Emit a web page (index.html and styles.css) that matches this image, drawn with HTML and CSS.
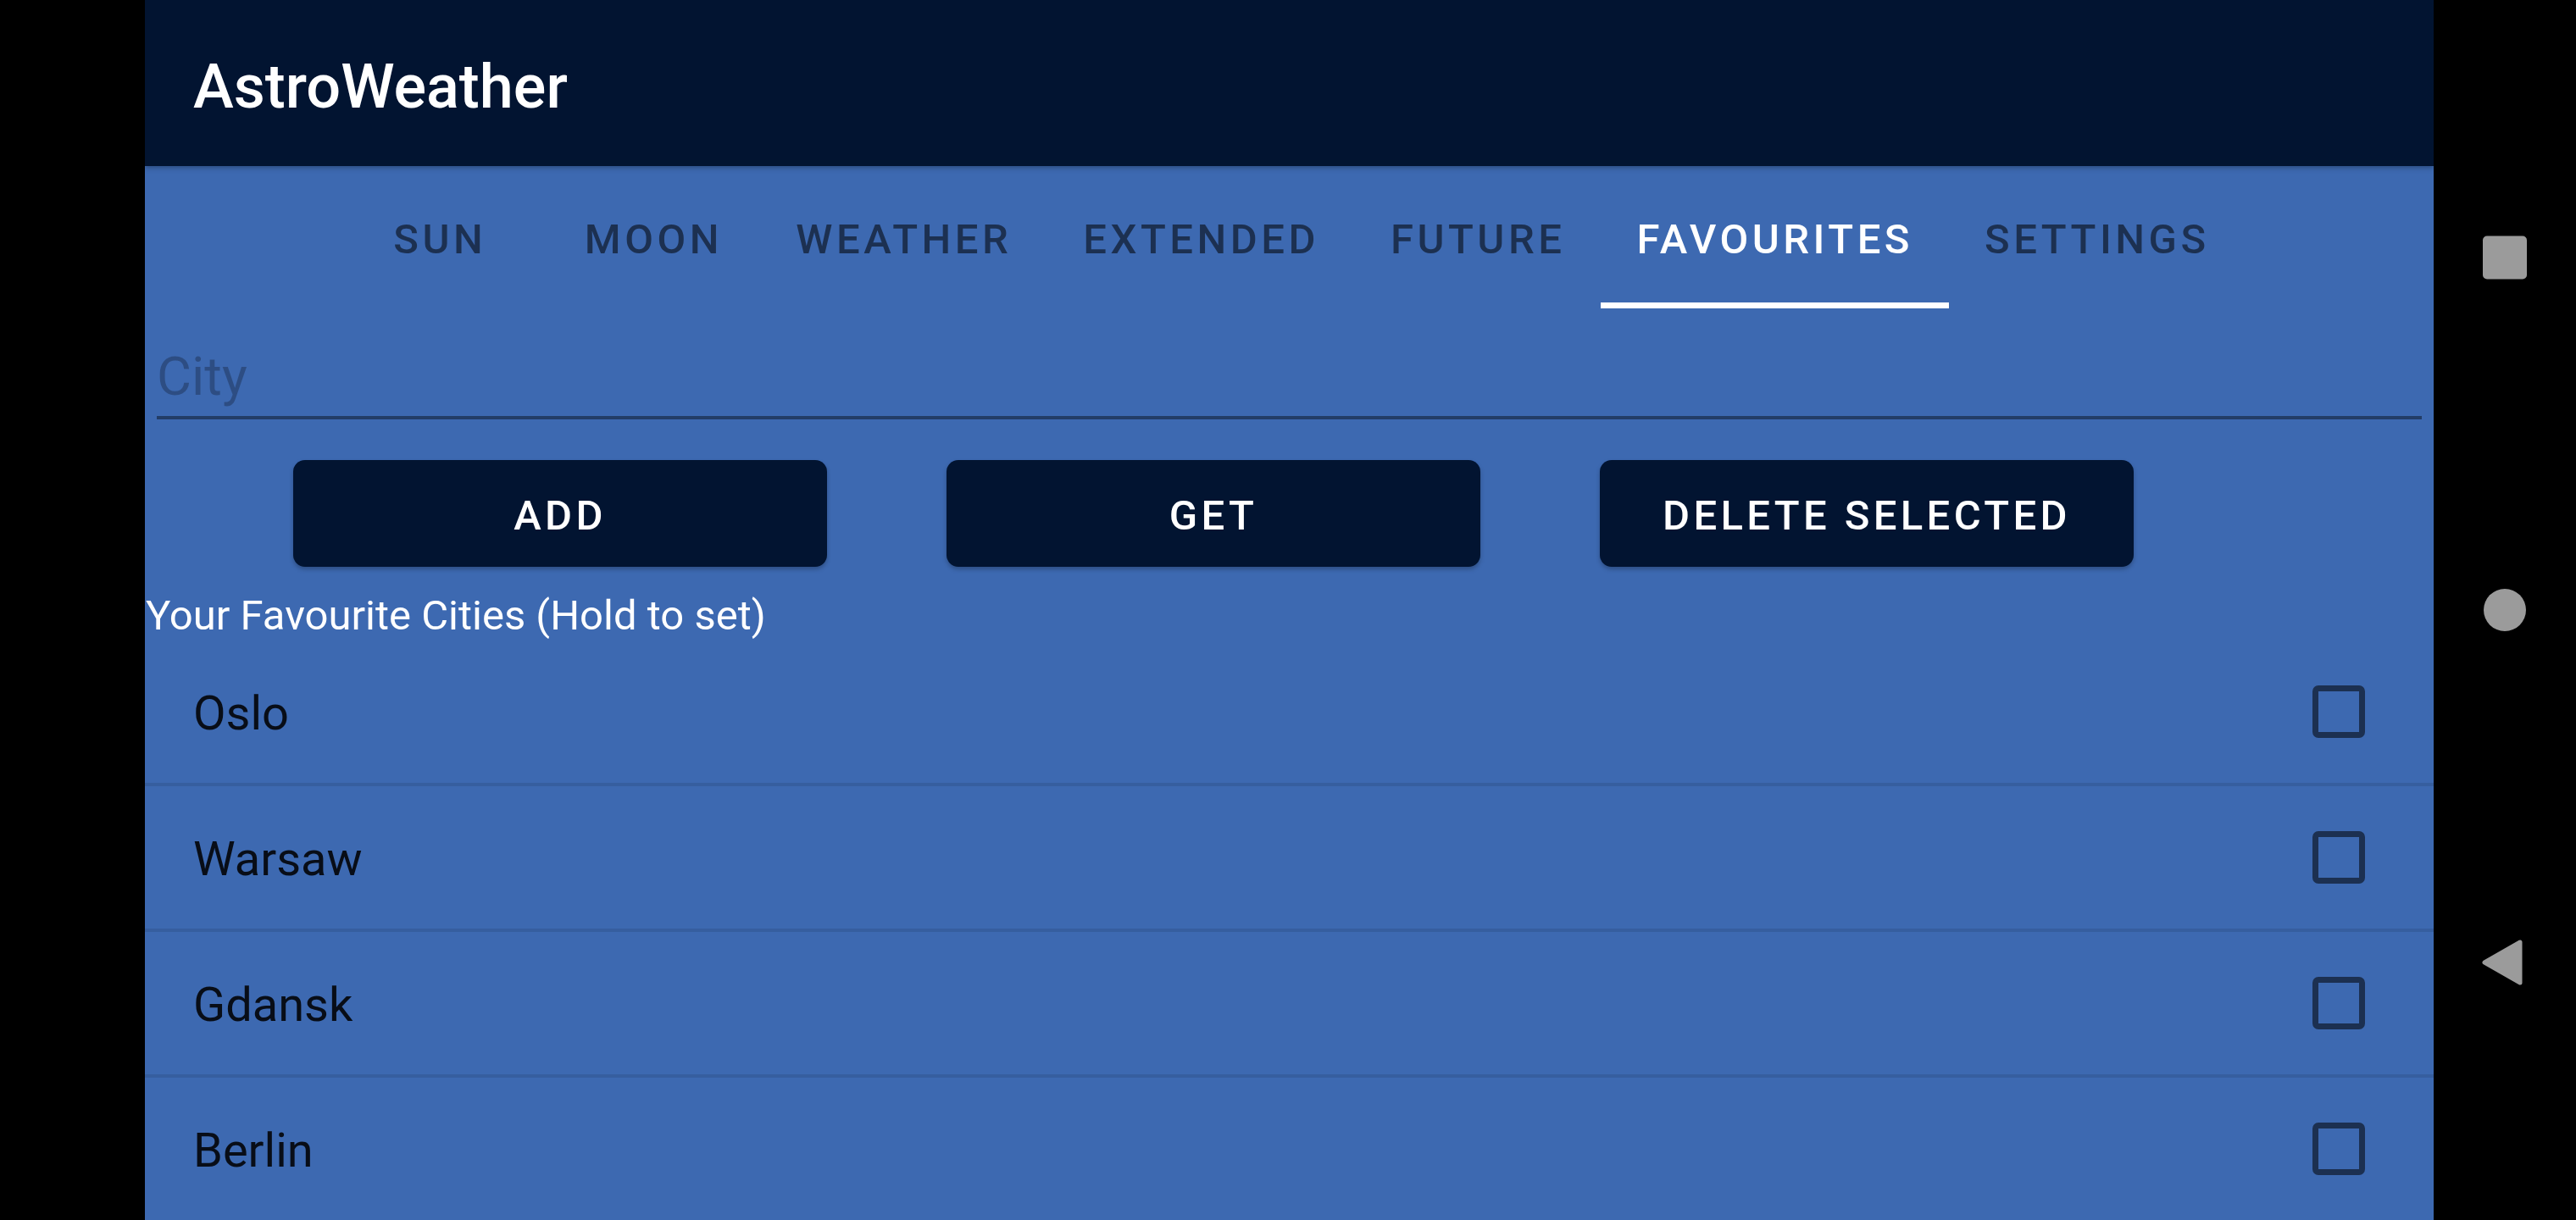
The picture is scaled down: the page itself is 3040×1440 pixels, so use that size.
FILE: index.html
```html
<!DOCTYPE html>
<html lang="en">
<head>
<meta charset="utf-8">
<title>AstroWeather</title>
<link rel="stylesheet" href="styles.css">
</head>
<body>
<div class="screen">
  <div class="side-left"></div>
  <main class="app">
    <header class="toolbar"><h1 class="title">AstroWeather</h1></header>
    <nav class="tabs">
      <div class="tab">Sun</div>
      <div class="tab">Moon</div>
      <div class="tab">Weather</div>
      <div class="tab">Extended</div>
      <div class="tab">Future</div>
      <div class="tab active">Favourites</div>
      <div class="tab">Settings</div>
    </nav>
    <div class="field"><input class="city-input" type="text" placeholder="City"></div>
    <div class="actions">
      <button class="btn">Add</button>
      <button class="btn">Get</button>
      <button class="btn">Delete selected</button>
    </div>
    <div class="label">Your Favourite Cities (Hold to set)</div>
    <ul class="cities">
      <li class="city"><span>Oslo</span><span class="check"></span></li>
      <li class="city"><span>Warsaw</span><span class="check"></span></li>
      <li class="city"><span>Gdansk</span><span class="check"></span></li>
      <li class="city"><span>Berlin</span><span class="check"></span></li>
    </ul>
  </main>
  <aside class="navbar">
    <svg class="nav-icon" width="60" height="60" viewBox="0 0 60 60"><rect x="4" y="4.5" width="52" height="51" rx="5" fill="#9b9b9b"/></svg>
    <svg class="nav-icon" width="60" height="60" viewBox="0 0 60 60"><circle cx="30" cy="30" r="25" fill="#9b9b9b"/></svg>
    <svg class="nav-icon" width="60" height="60" viewBox="0 0 60 60"><polygon points="6,30 48,6 48,54" fill="#9b9b9b" stroke="#9b9b9b" stroke-width="5" stroke-linejoin="round"/></svg>
  </aside>
</div>
</body>
</html>
```

FILE: styles.css
```css
* { box-sizing: border-box; }
html, body { margin: 0; padding: 0; background: #000; }
body { font-family: Roboto, "Noto Sans", "Liberation Sans", sans-serif; }

.screen { display: flex; width: 3040px; height: 1440px; overflow: hidden; }
.side-left { width: 171px; flex: none; background: #000; }
.app { width: 2701px; flex: none; background: #3d69b1; display: flex; flex-direction: column; overflow: hidden; }
.navbar { width: 168px; flex: none; background: #000; display: flex; flex-direction: column; align-items: center; justify-content: center; gap: 356px; }
.nav-icon { display: block; }

.toolbar { height: 196px; flex: none; background: #021431; display: flex; align-items: center; padding: 8px 0 0 57px; position: relative; z-index: 1; box-shadow: 0 2px 6px rgba(0,0,0,0.3); }
.title { margin: 0; font-size: 72px; font-weight: 500; color: #fff; letter-spacing: 0; }

.tabs { height: 168px; flex: none; display: flex; justify-content: center; }
.tab { min-width: 252px; padding: 4px 42px 0; display: flex; align-items: center; justify-content: center; font-size: 49px; font-weight: 500; letter-spacing: 4.5px; text-transform: uppercase; color: rgba(0,0,0,0.54); white-space: nowrap; }
.tab.active { color: #fff; box-shadow: inset 0 -7px 0 #fff; }

.field { margin: 43px 14px 0; }
.city-input { display: block; width: 100%; height: 88px; padding: 0 0 10px 0; margin: 0; border: 0; border-bottom: 4px solid rgba(0,0,0,0.42); background: transparent; font-family: Roboto, sans-serif; font-size: 63px; color: rgba(0,0,0,0.87); outline: none; }
.city-input::placeholder { color: rgba(0,0,0,0.26); }

.actions { display: flex; gap: 141px; padding-left: 175px; margin-top: 48px; }
.btn { width: 630px; height: 126px; border: 0; border-radius: 14px; background: #021431; color: #fff; font-family: Roboto, sans-serif; font-size: 49px; font-weight: 500; letter-spacing: 4.375px; text-transform: uppercase; padding: 4px 0 0; box-shadow: 0 3px 5px rgba(0,0,0,0.25); }

.label { margin-top: 28px; font-size: 49px; line-height: 59px; color: #fff; padding-left: 1px; }

.cities { list-style: none; margin: 0; padding: 0; }
.city { height: 172px; border-bottom: 4px solid rgba(0,0,0,0.1); display: flex; align-items: center; justify-content: space-between; padding: 4px 81px 0 57px; font-size: 56px; color: rgba(0,0,0,0.87); }
.check { width: 62px; height: 62px; border: 7px solid rgba(0,0,0,0.54); border-radius: 7px; margin-top: -4px; }
```
